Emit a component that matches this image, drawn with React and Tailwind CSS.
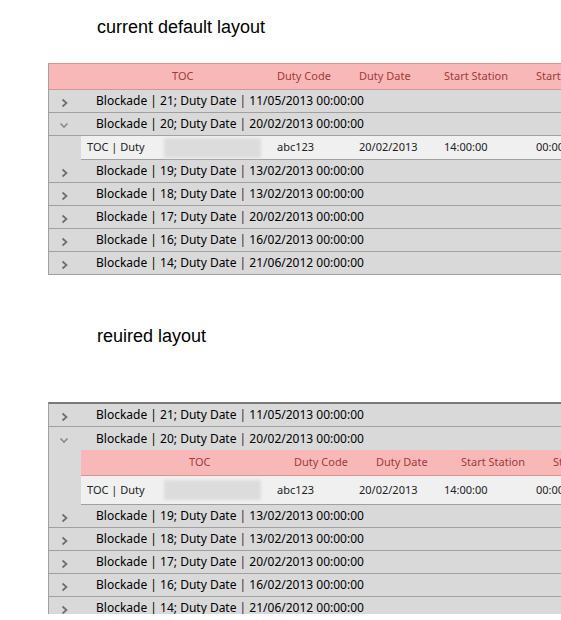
import React from 'react';

const rowFont = { fontFamily: '"Noto Sans", "Open Sans", sans-serif' };

const groups = [
  { id: 21, date: '11/05/2013' },
  { id: 20, date: '20/02/2013', open: true },
  { id: 19, date: '13/02/2013' },
  { id: 18, date: '13/02/2013' },
  { id: 17, date: '20/02/2013' },
  { id: 16, date: '16/02/2013' },
  { id: 14, date: '21/06/2012' },
];

function Chevron({ open }) {
  if (open) {
    return (
      <svg width="10" height="7" viewBox="0 0 10 7" className="mt-[3px]">
        <path d="M1.5 1.5 L5 5 L8.5 1.5" fill="none" stroke="#8a8a8a" strokeWidth="1.6" />
      </svg>
    );
  }
  return (
    <svg width="8" height="10" viewBox="0 0 8 10" className="mt-[4px]">
      <path d="M1.5 1.5 L5.5 5 L1.5 8.5" fill="none" stroke="#6e6e6e" strokeWidth="1.7" />
    </svg>
  );
}

function GroupRow({ g, noBorder }) {
  return (
    <div
      className={
        'flex items-center h-[23px] bg-[#d9d9d9] ' +
        (noBorder ? '' : 'border-b border-[#a0a0a0]')
      }
    >
      <div className={'w-[47px] shrink-0 flex ' + (g.open ? 'pl-[10px]' : 'pl-[12px]')}>
        <Chevron open={g.open} />
      </div>
      <span className="text-[12px] text-black whitespace-nowrap" style={rowFont}>
        Blockade | {g.id}; Duty Date <span className="text-[#451236]">|</span> {g.date} 00:00:00
      </span>
    </div>
  );
}

function Header({ lead, inner }) {
  return (
    <div
      className={
        'flex items-center bg-[#f9b8b8] border-b border-[#d99393] text-[11px] text-[#a03a3a] whitespace-nowrap ' +
        (inner ? 'h-[26px]' : 'h-[27px] border-t border-[#c9a3a3]')
      }
      style={rowFont}
    >
      <div style={{ width: lead }} className="shrink-0" />
      <div className="w-[196px] shrink-0 pl-[91px]">TOC</div>
      <div className="w-[82px] shrink-0">Duty Code</div>
      <div className="w-[85px] shrink-0">Duty Date</div>
      <div className="w-[92px] shrink-0">Start Station</div>
      <div className="shrink-0">Start</div>
    </div>
  );
}

function DetailRow({ tall }) {
  return (
    <div
      className={
        'flex items-center bg-[#f0f0f0] border-b border-[#a0a0a0] text-[11px] text-[#222] whitespace-nowrap ' +
        (tall ? 'h-[29px]' : 'h-[24px]')
      }
      style={rowFont}
    >
      <div className="w-[83px] shrink-0 pl-[6px]">TOC | Duty</div>
      <div className="w-[97px] h-[20px] shrink-0 rounded-[2px] bg-[#dcdcdc] blur-[1.5px]" />
      <div className="w-[16px] shrink-0" />
      <div className="w-[82px] shrink-0">abc123</div>
      <div className="w-[85px] shrink-0">20/02/2013</div>
      <div className="w-[92px] shrink-0">14:00:00</div>
      <div className="shrink-0">00:00</div>
    </div>
  );
}

function Indented({ children }) {
  return (
    <div className="flex bg-[#d9d9d9]">
      <div className="w-[32px] shrink-0" />
      <div className="flex-1 min-w-0">{children}</div>
    </div>
  );
}

function DefaultGrid() {
  return (
    <div className="ml-[48px] h-[212px] overflow-hidden border-l border-[#a0a0a0] w-[513px]">
      <div className="w-[600px]">
        <Header lead={32} />
        {groups.map((g) => (
          <React.Fragment key={g.id}>
            <GroupRow g={g} />
            {g.open && (
              <Indented>
                <DetailRow />
              </Indented>
            )}
          </React.Fragment>
        ))}
      </div>
    </div>
  );
}

function RequiredGrid() {
  return (
    <div className="ml-[48px] h-[212px] overflow-hidden border-l border-[#a0a0a0] border-t-2 border-t-[#7a7a7a] w-[513px]">
      <div className="w-[600px]">
        {groups.map((g) => (
          <React.Fragment key={g.id}>
            <GroupRow g={g} noBorder={g.open} />
            {g.open && (
              <Indented>
                <Header lead={17} inner />
                <DetailRow tall />
              </Indented>
            )}
          </React.Fragment>
        ))}
      </div>
    </div>
  );
}

export default function App() {
  const titleFont = { fontFamily: '"Liberation Sans", Arial, sans-serif' };
  return (
    <div className="w-[561px] h-[620px] bg-white overflow-hidden">
      <div className="pt-[16px] pl-[97px] h-[38px] leading-[22px] text-[18px] text-black" style={titleFont}>
        current default layout
      </div>
      <div className="mt-[25px]">
        <DefaultGrid />
      </div>
      <div className="mt-[50px] pl-[97px] h-[22px] leading-[22px] text-[18px] text-black" style={titleFont}>
        reuired layout
      </div>
      <div className="mt-[55px]">
        <RequiredGrid />
      </div>
    </div>
  );
}
